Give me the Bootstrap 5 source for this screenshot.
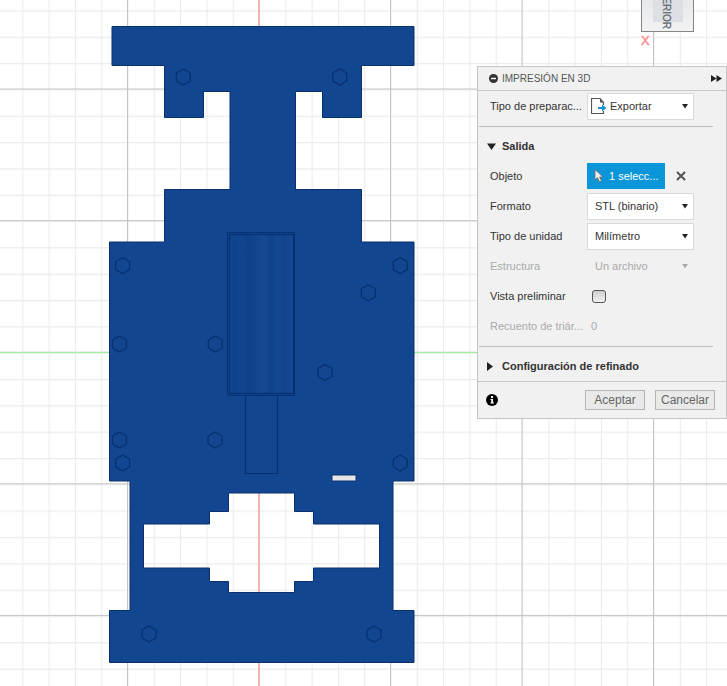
<!DOCTYPE html>
<html lang="es">
<head>
<meta charset="utf-8">
<meta name="viewport" content="width=device-width, initial-scale=1">
<title>Impresión en 3D</title>
<link href="https://cdn.jsdelivr.net/npm/bootstrap@5.3.0/dist/css/bootstrap.min.css" rel="stylesheet">
<style>
  body { font: 11px/16px "Liberation Sans", Arial, sans-serif; color: #333; background: #fff; }
  .viewport { min-height: 100vh; }
  .print-panel { top: 66px; width: 250px; background: #f1f1f1; border: 1px solid #c4c4c4; }
  .panel-head { height: 24px; padding: 0 4px 0 11px; border-bottom: 1px solid #c8c8c8; }
  .panel-title { font-size: 10px; line-height: 16px; color: #555; }
  .prop-row { height: 30px; padding-left: 12px; }
  .prop-name { width: 97px; white-space: nowrap; }
  .field-box { width: 107px; height: 27px; background: #fff; border: 1px solid #d9d9d9; }
  .field-box svg { margin-left: 3px; }
  .field-select { font: inherit; color: inherit; height: 25px; padding: 0 16px 0 7px; appearance: none;
    background: url("data:image/svg+xml,%3Csvg xmlns='http://www.w3.org/2000/svg' width='6' height='5'%3E%3Cpath d='M0 0h6L3 4.5z' fill='%23222'/%3E%3C/svg%3E") no-repeat right 5px center; }
  .field-icon + .field-select { padding-left: 3px; }
  .is-off { color: #aaa; }
  .is-off .field-box { background: none; border-color: transparent; }
  .is-off .field-select { opacity: 1; color: #aaa;
    background-image: url("data:image/svg+xml,%3Csvg xmlns='http://www.w3.org/2000/svg' width='6' height='5'%3E%3Cpath d='M0 0h6L3 4.5z' fill='%23aaa'/%3E%3C/svg%3E"); }
  .rule { height: 1px; margin: 5px 13px 4px 1px; background: #bdbdbd; }
  .section-btn { font-size: 11px; line-height: 16px; font-weight: bold; padding: 0 0 0 9px; height: 30px; gap: 6px; color: #333; }
  .pick-btn { font: inherit; width: 78px; height: 26px; padding: 0 0 0 7px; gap: 5px; background: #0a96d9; color: #fff; }
  .pick-btn:hover { background: #0786c4; }
  .clear-btn { margin-left: 11px; }
  .tick { width: 14px; height: 13px; margin-left: 5px; appearance: none; border: 1px solid #555; border-radius: 3px; background: linear-gradient(#cfcfcf, #f2f2f2); }
  .tick:checked { background: #0a96d9; }
  .panel-foot { height: 37px; padding: 0 11px 0 8px; gap: 10px; border-top: 1px solid #c8c8c8; }
  .foot-btn { font-size: 12px; line-height: 18px; height: 20px; width: 60px; padding: 0; color: #666; background: #e9e9e9; border: 1px solid #b5b5b5; }
  .cube-text { font: 10px "Liberation Sans Narrow", "Liberation Sans", sans-serif; fill: #666a70; stroke: #666a70; stroke-width: .3; }
  .axis-text { font: 13px "Liberation Sans", Arial, sans-serif; fill: #f77; stroke: #f99; stroke-width: .5; }
</style>
<script src="https://cdn.jsdelivr.net/npm/bootstrap@5.3.0/dist/js/bootstrap.bundle.min.js"></script>
</head>
<body>
<main class="viewport position-relative overflow-hidden">
  <svg class="position-absolute top-0 start-0 w-100 h-100" role="img" aria-label="Vista de la pieza">
    <defs>
      <pattern id="fine" x="127.5" y="89.3" width="26.3" height="26.33" patternUnits="userSpaceOnUse">
        <path d="M0 .5H26.4M.5 0V26.4" stroke="#ebebeb" stroke-width="1.2"/>
      </pattern>
      <pattern id="coarse" x="127" y="88.5" width="131.5" height="131.6" patternUnits="userSpaceOnUse">
        <path d="M0 .5H132M.5 0V132" stroke="#c4c4c4" stroke-width="1"/>
      </pattern>
      <linearGradient id="bore">
        <stop offset="0" stop-color="#134690"/><stop offset=".08" stop-color="#10418c"/>
        <stop offset=".2" stop-color="#124590"/><stop offset=".3" stop-color="#0f408a"/>
        <stop offset=".45" stop-color="#134690"/><stop offset=".55" stop-color="#164893"/>
        <stop offset=".65" stop-color="#10418b"/><stop offset=".75" stop-color="#154893"/>
        <stop offset=".85" stop-color="#11428c"/><stop offset="1" stop-color="#184a92"/>
      </linearGradient>
      <linearGradient id="cubeface" x2="0" y2="1"><stop stop-color="#e3e5e8"/><stop offset="1" stop-color="#f3f3f3"/></linearGradient>
      <path id="hex" d="M0-8 7-4V4L0 8-7 4V-4Z"/>
    </defs>
    <rect width="100%" height="100%" fill="url(#fine)"/>
    <rect width="100%" height="100%" fill="url(#coarse)"/>
    <path d="M0 352.5H3000" stroke="#98f298"/>
    <path d="M259 0V3000" stroke="#f7a3a3" stroke-width="1.4"/>
    <path fill="#134690" fill-rule="evenodd" stroke="#0a2f6c" stroke-width="1" d="M112 26.500H414V65.500H361.500V117.500H322.500V91.500H295.500V189.500H361.500V242H414V481H393V610.500H414V662.500H109.500V610.500H130V481H109.500V242H164.500V189.500H230V91.500H203.500V117.500H164.500V65.500H112Z
      M228.500 493V511.500H209.500V524H143.500V568H209.500V581.500H228.500V592.500H294.500V581.500H313.500V568H379.500V524H313.500V511.500H294.500V493Z"/>
    <g fill="none" stroke="#06306f" stroke-width="1.2">
      <rect x="227.500" y="232.500" width="67" height="163" stroke-width="1"/>
      <rect x="229.500" y="234.500" width="64" height="159" fill="url(#bore)"/>
      <path d="M245.500 395.500V473.500H277.500V395.500"/>
      <use href="#hex" x="183.300" y="77"/><use href="#hex" x="339.700" y="77"/>
      <use href="#hex" x="122.600" y="265.600"/><use href="#hex" x="400.300" y="265.600"/>
      <use href="#hex" x="368.300" y="292.800"/><use href="#hex" x="119.500" y="344"/>
      <use href="#hex" x="215.300" y="344"/><use href="#hex" x="325" y="372.400"/>
      <use href="#hex" x="119.500" y="440"/><use href="#hex" x="215" y="440"/>
      <use href="#hex" x="122.600" y="463"/><use href="#hex" x="400.300" y="463"/>
      <use href="#hex" x="149" y="634"/><use href="#hex" x="374" y="634"/>
    </g>
    <rect x="332" y="475" width="24" height="6" fill="#e6e6e6" stroke="#0b3273"/>
    <rect x="641.500" y="-10" width="52" height="41.500" fill="url(#cubeface)" stroke="#858585"/>
    <rect x="653" y="0" width="30" height="22" fill="#dcdfe4"/>
    <text class="cube-text" transform="translate(663 29) rotate(90)" text-anchor="end">ERIOR</text>
    <text class="axis-text" x="641" y="45">X</text>
  </svg>

  <section class="print-panel position-absolute end-0" aria-label="Impresión en 3D">
    <header class="panel-head d-flex align-items-center">
      <button type="button" class="btn p-0 border-0 d-flex" aria-label="Contraer">
        <svg width="9" height="9"><circle cx="4.500" cy="4.500" r="4.500" fill="#333"/><path d="M2 4.500H7" stroke="#fff" stroke-width="1.500"/></svg>
      </button>
      <h1 class="panel-title fw-normal mb-0 ms-1 me-auto">IMPRESIÓN EN 3D</h1>
      <button type="button" class="btn p-0 border-0 d-flex" aria-label="Acoplar">
        <svg width="11" height="7"><path d="M0 0 5.500 3.500 0 7ZM5.500 0 11 3.500 5.500 7Z" fill="#222"/></svg>
      </button>
    </header>

    <div class="prop-row d-flex align-items-center">
      <label class="prop-name" for="prep">Tipo de preparac...</label>
      <div class="field-box d-flex align-items-center">
        <svg class="field-icon flex-shrink-0" width="16" height="16" fill="none"><path d="M12.500 7V4.500L9 .5H.5V15.500H12.500V13" stroke="#555" stroke-width="1.200"/><path d="M9 .5V4.500H12.500Z" fill="#555"/><path d="M7 9H11V6.500L15.500 10 11 13.500V11H7Z" fill="#198fd6"/></svg>
        <select id="prep" class="field-select border-0 w-100"><option>Exportar</option></select>
      </div>
    </div>

    <div class="rule"></div>

    <button type="button" class="section-btn btn border-0 d-flex align-items-center" aria-expanded="true">
      <svg width="9" height="7"><path d="M0 .5H9L4.500 7Z" fill="#222"/></svg>Salida
    </button>

    <div class="prop-row d-flex align-items-center">
      <span class="prop-name">Objeto</span>
      <button type="button" class="pick-btn border-0 d-flex align-items-center">
        <svg width="10" height="14"><path d="M1 .5V11L3.500 8.700 5.500 13 7.500 12 5.600 8H9Z" fill="#eee" stroke="#666" stroke-width=".8"/></svg>1 selecc...
      </button>
      <button type="button" class="clear-btn btn p-0 border-0 d-flex" aria-label="Quitar selección">
        <svg width="10" height="10"><path d="M1 1 9 9M9 1 1 9" stroke="#555" stroke-width="2"/></svg>
      </button>
    </div>
    <div class="prop-row d-flex align-items-center">
      <label class="prop-name" for="fmt">Formato</label>
      <div class="field-box d-flex"><select id="fmt" class="field-select border-0 w-100"><option>STL (binario)</option></select></div>
    </div>
    <div class="prop-row d-flex align-items-center">
      <label class="prop-name" for="unit">Tipo de unidad</label>
      <div class="field-box d-flex"><select id="unit" class="field-select border-0 w-100"><option>Milímetro</option></select></div>
    </div>
    <div class="prop-row is-off d-flex align-items-center">
      <label class="prop-name" for="struct">Estructura</label>
      <div class="field-box d-flex"><select id="struct" class="field-select border-0 w-100" disabled><option>Un archivo</option></select></div>
    </div>
    <div class="prop-row d-flex align-items-center">
      <label class="prop-name" for="preview">Vista preliminar</label>
      <input class="tick" type="checkbox" id="preview">
    </div>
    <div class="prop-row is-off d-flex align-items-center">
      <label class="prop-name" for="tris">Recuento de triár...</label>
      <output id="tris" class="ms-1 pt-0">0</output>
    </div>

    <div class="rule"></div>

    <button type="button" class="section-btn btn border-0 d-flex align-items-center" aria-expanded="false">
      <svg width="9" height="9"><path d="M0 0V9L6 4.500Z" fill="#222"/></svg>Configuración de refinado
    </button>

    <footer class="panel-foot d-flex align-items-center">
      <button type="button" class="btn p-0 border-0 d-flex me-auto" aria-label="Información">
        <svg width="12" height="12"><circle cx="6" cy="6" r="6" fill="#000"/><path d="M5 2H7V4H5ZM4.500 5H7V8.500H8V9.500H4.500V8.500H5.200V6H4.500Z" fill="#fff"/></svg>
      </button>
      <button type="button" class="foot-btn">Aceptar</button>
      <button type="button" class="foot-btn">Cancelar</button>
    </footer>
  </section>
</main>
</body>
</html>
